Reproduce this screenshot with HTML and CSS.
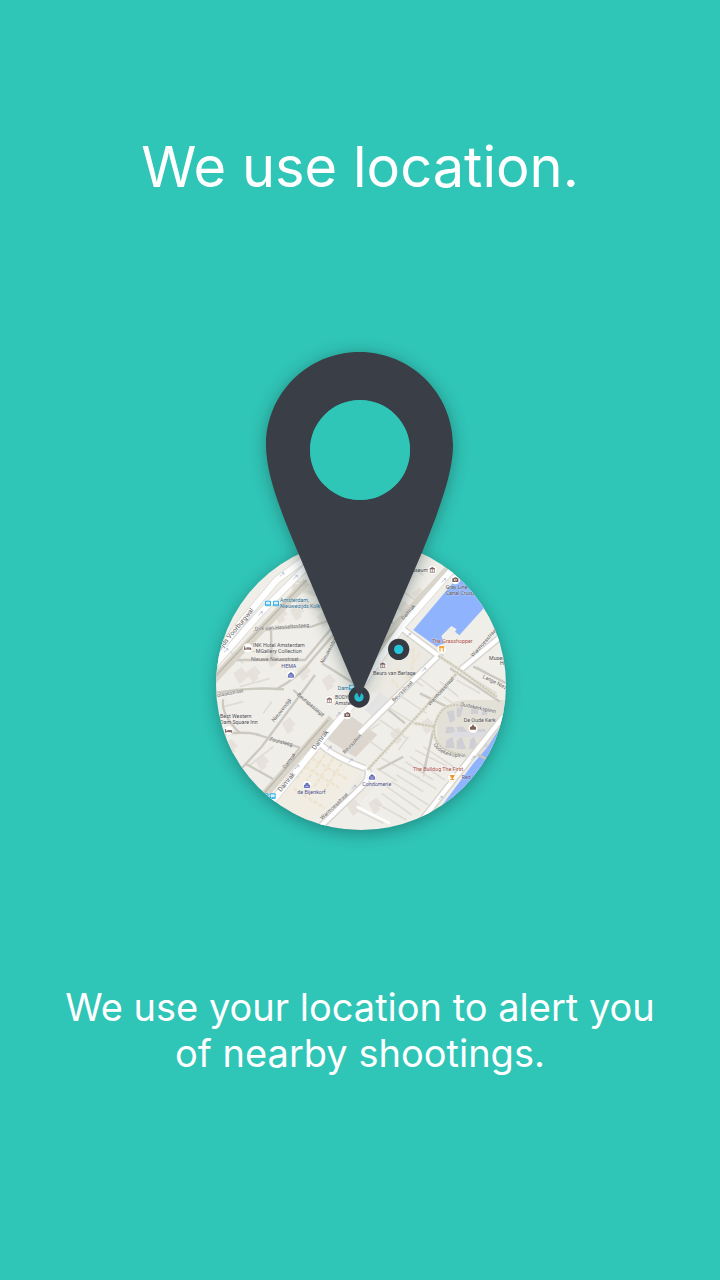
FILE: index.html
```html
<!DOCTYPE html>
<html lang="en">
<head>
<meta charset="utf-8">
<meta name="viewport" content="width=device-width, initial-scale=1">
<title>We use location.</title>
<link rel="stylesheet" href="styles.css">
</head>
<body>
<main class="intro">
  <h1 class="title">We use location.</h1>
  <svg class="art" viewBox="0 0 1020 1620" role="img" aria-label="Location pin over a city map">
    <defs>
      <clipPath id="disc"><circle cx="513" cy="1095" r="435"/></clipPath>
      <path id="kerk" d="M730 1274 Q756 1318 842 1311"/>
      <g id="spot"><circle r="14" fill="#fff" stroke="#ddd8d0"/></g>
      <g id="bag"><use href="#spot"/><path d="M-8-1H8V7H-8ZM-4-2V-5Q0-9 4-5V-2" fill="#5964b4" stroke="#5964b4" stroke-width="2"/><path d="M-5 3H5" stroke="#fff" stroke-width="2"/></g>
      <g id="museum"><use href="#spot"/><path d="M-8-3 0-8 8-3ZM-6-2V6M0-2V6M6-2V6M-8 7H8" fill="#80605a" stroke="#80605a" stroke-width="2"/></g>
      <g id="camera"><use href="#spot"/><path d="M-9-4H-4L-2-7H3L5-4H9V7H-9Z" fill="#765b55"/><circle cy="1" r="4" fill="#fff"/><circle cy="1" r="2" fill="#765b55"/></g>
      <g id="bed"><use href="#spot"/><path d="M-9-5V6M-9 3H9V6M-4 0H9V3" fill="none" stroke="#735850" stroke-width="3"/></g>
      <g id="train"><rect x="-9" y="-8" width="18" height="17" rx="3" fill="#27aee8"/><path d="M-5-4H5V2H-5ZM-5 6H-2M2 6H5" fill="#bde9fa" stroke="#fff" stroke-width="2"/></g>
      <g id="block"><path d="M0 0 24-18 43 3 31 12 37 19 18 33Z"/></g>
    </defs>

    <circle class="disc" cx="513" cy="1095" r="435"/>
    <g clip-path="url(#disc)">
      <g class="buildings">
        <use href="#block" x="130" y="1060"/><use href="#block" x="170" y="1055"/><use href="#block" x="225" y="1010"/>
        <use href="#block" x="250" y="880"/><use href="#block" x="300" y="870"/><use href="#block" x="380" y="890"/>
        <use href="#block" x="100" y="1275"/><use href="#block" x="195" y="1320"/><use href="#block" x="275" y="1210"/>
        <use href="#block" x="150" y="900"/><use href="#block" x="320" y="1050"/><use href="#block" x="395" y="1080"/>
        <use href="#block" x="665" y="820"/><use href="#block" x="620" y="860"/><use href="#block" x="535" y="1450"/>
        <use href="#block" x="470" y="1455"/><use href="#block" x="600" y="1240"/><use href="#block" x="690" y="1210"/>
        <path d="M310 790 420 815 400 835 305 812ZM320 840 400 855 390 872 318 858ZM140 1065 205 1047 208 1062 144 1082Z"/>
      </g>
      <path d="M400 1250 475 1182 562 1244 496 1312Z" fill="#ddd6cf"/>
      <path d="M300 1392 382 1280 520 1345 436 1442 350 1510 265 1445Z" fill="#f2ede3"/>
      <path d="M470 1415 510 1360 555 1400 510 1450Z" fill="#eeebe4"/>
      <path d="M645 940 735 1010 600 1150 545 1110Z" fill="#ebe9e2"/>
      <path d="M524 1170 570 1115 610 1150 560 1200Z" fill="#e5e4e4"/>
      <path d="M745 1190Q770 1140 830 1140H960L915 1300Q860 1325 790 1305Q725 1280 745 1190Z" fill="#e3e1d7"/>
      <g fill="none" stroke="#ece4d0" stroke-width="8" stroke-dasharray="13 5">
        <path d="M382 1295 315 1382M405 1303 338 1400M430 1315 372 1400M455 1330 400 1415M310 1405 405 1465M365 1315 475 1380M345 1340 450 1405"/>
        <path d="M650 960 625 1020M670 985 665 1070M690 1000 665 1035M620 1045 660 1085M605 1080 632 1110"/>
      </g>
      <g fill="#cfced4">
        <path d="M770 1175 790 1170 796 1200 780 1208ZM800 1155 820 1160 812 1190 800 1192ZM770 1220H790L798 1240H765ZM800 1220H820L835 1240H803ZM845 1160 862 1160 865 1182H842ZM880 1165 895 1168 890 1185H874ZM865 1228H885L895 1245H860ZM898 1230 915 1235 908 1250ZM770 1260 788 1250 794 1285H765ZM800 1262 815 1250 828 1287H800ZM840 1260 852 1250 865 1287H838ZM875 1260 890 1250 892 1280H873Z"/>
        <path d="M785 1235H895L880 1252H790Z" fill="#dddce2"/>
      </g>
      <g class="eaves">
        <path d="M660 1310 765 1380M645 1325 730 1380M635 1345 740 1408M620 1365 700 1415M605 1385 715 1455M590 1400 690 1470M575 1420 665 1485M550 1445 650 1500M675 1290 770 1338M700 1280 790 1340M575 1315 690 1375M730 1230 700 1370M535 1260 590 1300M570 1200 650 1255M600 1165 680 1215M635 1130 710 1180M800 1080 870 1120M825 1060 920 1120M860 1040 945 1090M750 1085 805 1130M690 1075 750 1120M760 1130 810 1165M560 1345 620 1382M500 1470 580 1510M530 1235 570 1210M655 1250 625 1290M650 1065 700 1100"/>
        <path d="M305 778 400 812M310 800 390 825M150 905 190 875M110 985 160 1030M150 1100 240 1075M180 1335 250 1280M100 1160 160 1145M220 1180 245 1145M610 850 670 900M640 815 690 850M700 765 650 730"/>
      </g>

      <g class="water">
        <path d="M670 930 800 775 960 770 885 860 808 946 795 935 800 928 784 918 754 948 762 970 740 980Z"/>
        <path d="M935 1215 890 1285 850 1330 735 1485 930 1420 1000 1190Z"/>
      </g>
      <path d="M865 1305 900 1322" stroke="#ccc7bb" stroke-width="7"/>

      <g class="lanes">
        <path d="M80 1118Q190 1100 282 1108M120 1020H345L430 918M255 1110Q330 1070 365 1020L460 910M190 935Q260 923 365 920L420 900M375 1065 215 1280 155 1345M75 1245Q175 1230 215 1248L330 1283M165 1330 250 1378M330 1283 300 1320 260 1390M310 1110 398 1190M396 1030 500 1095M243 930 245 1015M100 1138Q90 1180 150 1240M610 910 550 870"/>
        <path d="M590 1165 645 1210M730 1230 700 1360M640 1310 565 1350M780 1045 930 1145M850 1040 950 1090M690 1120 770 1160"/>
      </g>
      <g class="rail">
        <path d="M350 785 65 1085"/>
        <path d="M780 742 625 910 560 990M425 1195 205 1445"/>
      </g>
      <path class="rail-line" d="M350 780 65 1080M790 744 560 990M415 1200 200 1445"/>

      <g class="roads-edge">
        <path d="M355 710 260 780 155 905 65 1020M355 735 210 880 60 1050"/>
        <path d="M790 745 640 915 515 1095 490 1150 375 1285 210 1490"/>
        <path d="M635 925 745 1007 650 1100 508 1240M388 1270Q430 1310 525 1345M980 910 805 1055M530 1340Q545 1370 515 1400L370 1540M940 1190 845 1310 680 1520"/>
      </g>
      <g class="roads">
        <path d="M355 710 260 780 155 905 65 1020M355 735 210 880 60 1050"/>
        <path d="M790 745 640 915 515 1095 490 1150 375 1285 210 1490"/>
        <path class="narrow" d="M635 925 745 1007 650 1100 508 1240M388 1270Q430 1310 525 1345M980 910 805 1055M530 1340Q545 1370 515 1400L370 1540M940 1190 845 1310 680 1520"/>
        <path class="alley" d="M500 1460 600 1510"/>
      </g>
      <g class="footpath-edge"><path d="M805 1055 532 1350M745 1007 810 1050 920 1130M675 1210 733 1220Q750 1150 805 1155M733 1220Q725 1290 815 1303"/></g>
      <g class="footpath"><path d="M805 1055 532 1350M745 1007 810 1050 920 1130M675 1210 733 1220Q750 1150 805 1155M733 1220Q725 1290 815 1303"/></g>
      <g class="arrows">
        <path id="arrow" d="M270 769 282 758M276 758H282V764"/>
        <use href="#arrow" x="40" y="8"/><use href="#arrow" x="-65" y="117"/><use href="#arrow" x="-168" y="228"/><use href="#arrow" x="485" y="18"/>
        <use href="#arrow" x="168" y="420"/><use href="#arrow" x="45" y="578"/><use href="#arrow" x="215" y="638"/><use href="#arrow" x="425" y="286"/><use href="#arrow" x="475" y="671"/><use href="#arrow" x="572" y="551"/><use href="#arrow" x="380" y="182"/><use href="#arrow" x="142" y="521"/><use href="#arrow" x="205" y="559"/>
      </g>

      <g class="street">
        <text class="major" transform="translate(90 993) rotate(-50)">zijds Voorburgwal</text>
        <text transform="translate(195 932) rotate(-4)">Dirk van Hasseltssteeg</text>
        <text x="183" y="1024">Nieuwe Nieuwstraat</text>
        <text transform="translate(400 1032) rotate(-61)">Nieuwendijk</text>
        <text transform="translate(74 1133) rotate(-11)">colaasstraat</text>
        <text transform="translate(252 1207) rotate(-51)">Nieuwendijk</text>
        <text transform="translate(320 1126) rotate(39)">Beurspassage</text>
        <text transform="translate(237 1261) rotate(15)">Zoutsteeg</text>
        <text transform="translate(285 1347) rotate(-51)">Damrak</text>
        <text class="major" transform="translate(375 1291) rotate(-53)">Damrak</text>
        <text class="major" transform="translate(272 1417) rotate(-50)">Damrak</text>
        <text transform="translate(464 1302) rotate(-46)">Beursplein</text>
        <text transform="translate(397 1500) rotate(-44)">Warmoesstraat</text>
        <text transform="translate(640 900) rotate(-48)">Damrak</text>
        <text transform="translate(850 1012) rotate(-49)">Warmoesstraat</text>
        <text transform="translate(720 1158) rotate(-48)">Warmoesstraat</text>
        <text transform="translate(612 1146) rotate(-45)">Beursstraat</text>
        <text transform="translate(877 1073) rotate(27)">Lange Niezel</text>
        <text transform="translate(810 1157) rotate(12)">Oudekerksplein</text>
        <text><textPath href="#kerk">Oudekerksplein</textPath></text>
      </g>
      <g class="place">
        <g class="transit"><text x="270" y="847">Amsterdam,</text><text x="270" y="865">Nieuwezijds Kolk</text><text x="443" y="1109">Dam</text></g>
        <text x="189" y="980">INK Hotel Amsterdam</text><text x="189" y="998">- MGallery Collection</text>
        <text x="90" y="1193">Best Western</text><text x="90" y="1212">Dam Square Inn</text>
        <text x="435" y="1137">BODY</text><text x="435" y="1155">Amsterdam</text>
        <text x="652" y="756">Museum</text><text x="767" y="808">Gray Line</text><text x="767" y="826">Canal Cruises</text>
        <text x="549" y="1064">Beurs van Berlage</text>
        <text x="897" y="1019">Museum</text><text x="930" y="1036">Het</text>
        <text x="821" y="1205">De Oude Kerk</text>
        <g class="shop"><text x="274" y="1045">HEMA</text><text x="322" y="1423">de Bijenkorf</text><text x="517" y="1399">Condomerie</text><text x="815" y="1377">Red Light</text></g>
        <g class="food"><text x="726" y="969">The Grasshopper</text><text x="669" y="1353">The Bulldog The First</text></g>
      </g>
      <use href="#train" x="234" y="850"/><use href="#train" x="258" y="850"/><use href="#train" x="486" y="1102"/><use href="#train" x="248" y="1428"/><use href="#train" x="226" y="1428"/>
      <use href="#bed" x="173" y="984"/><use href="#bed" x="116" y="1232"/>
      <use href="#bag" x="303" y="1065"/><use href="#bag" x="351" y="1396"/><use href="#bag" x="546" y="1371"/>
      <use href="#museum" x="418" y="1141"/><use href="#museum" x="578" y="1036"/><use href="#museum" x="727" y="750"/>
      <use href="#camera" x="472" y="1184"/><use href="#camera" x="796" y="779"/>
      <use href="#spot" x="849" y="1225"/><path d="M840 1229V1222L844 1218 846 1221V1217L849 1213 852 1217V1221L854 1218 858 1222V1229Z" fill="#80605a"/>
      <use href="#spot" x="755" y="988"/><path d="M748 980H762V983H760V995M750 980V995M748 983H760" fill="none" stroke="#ef9825" stroke-width="3"/>
      <use href="#spot" x="787" y="1372"/><path d="M779 1365H795L791 1373H789V1377H793V1380H781V1377H785V1373H783Z" fill="#ef9825"/>
    </g>

    <g class="marker"><circle cx="626" cy="988" r="32"/><circle cx="507" cy="1131" r="32"/></g>
    <g class="signal"><circle cx="626" cy="988" r="14"/><circle cx="507" cy="1131" r="14"/></g>
    <path class="pin" fill-rule="evenodd" d="M508 96C664 96 789 221 789 376C789 430 771 499 745 570C728 620 709 664 695 700L508 1133L325 700C310 662 291 620 273 570C246 499 228 430 228 376C228 221 353 96 508 96ZM510 240A150 150 0 1 0 510 540A150 150 0 1 0 510 240Z"/>
    <circle class="eye" cx="510" cy="390" r="150"/>
  </svg>
  <p class="message">We use your location to alert you of nearby shootings.</p>
</main>
</body>
</html>
```
FILE: styles.css
```css
* {
  box-sizing: border-box;
}

body {
  margin: 0;
  background: #2fc5b7;
  color: #fff;
  font-family: Inter, "Liberation Sans", sans-serif;
}

.intro {
  display: flex;
  flex-direction: column;
  align-items: center;
  min-height: 100vh;
  padding: 132px 48px 60px;
  text-align: center;
}

.title {
  margin: 0 0 118px;
  font-size: 56px;
  font-weight: 400;
  line-height: 70px;
}

.art {
  display: block;
  width: 340px;
  max-width: 100%;
  overflow: visible;
}

.message {
  max-width: 620px;
  margin: 124px 0 0;
  font-size: 38px;
  line-height: 46px;
}

.disc {
  fill: #f0eee8;
  filter: drop-shadow(0 12px 24px rgb(20 70 70 / 45%));
}

.pin {
  fill: #3a3e47;
  filter: drop-shadow(0 6px 24px rgb(30 60 60 / 45%));
}

.eye {
  fill: #2fc5b7;
}

.marker {
  fill: #363a43;
}

.signal {
  fill: #26c6da;
}

.buildings {
  fill: #e6e1da;
}

.eaves {
  fill: none;
  stroke: #dedcd5;
  stroke-width: 5;
}

.water {
  fill: #8fb4fd;
}

.lanes {
  fill: none;
  stroke: #cbc9c0;
  stroke-width: 7;
}

.rail {
  fill: none;
  stroke: #d9d5ca;
  stroke-width: 24;
}

.rail-line {
  fill: none;
  stroke: #bfbbb0;
  stroke-width: 5;
}

.roads-edge {
  fill: none;
  stroke: #d8d6d0;
  stroke-width: 22;
}

.roads {
  fill: none;
  stroke: #fff;
  stroke-width: 18;
}

.roads .narrow {
  stroke-width: 13;
}

.roads .alley {
  stroke-width: 8;
}

.footpath-edge {
  fill: none;
  stroke: #e2e0d5;
  stroke-width: 10;
}

.footpath {
  fill: none;
  stroke: #c9c6b2;
  stroke-width: 5;
  stroke-dasharray: 7 3;
}

.arrows {
  fill: none;
  stroke: #a8afcc;
  stroke-width: 2;
}

.street,
.place {
  font-family: Roboto, "Liberation Sans", sans-serif;
  font-size: 16px;
  paint-order: stroke;
  stroke: rgb(255 255 255 / 50%);
  stroke-width: 2;
}

.street {
  fill: #66645f;
}

.street .major {
  font-size: 20px;
}

.place {
  fill: #4b4b4e;
}

.place .transit {
  fill: #256d91;
}

.place .shop {
  fill: #474b82;
}

.place .food {
  fill: #a94c42;
}
```
